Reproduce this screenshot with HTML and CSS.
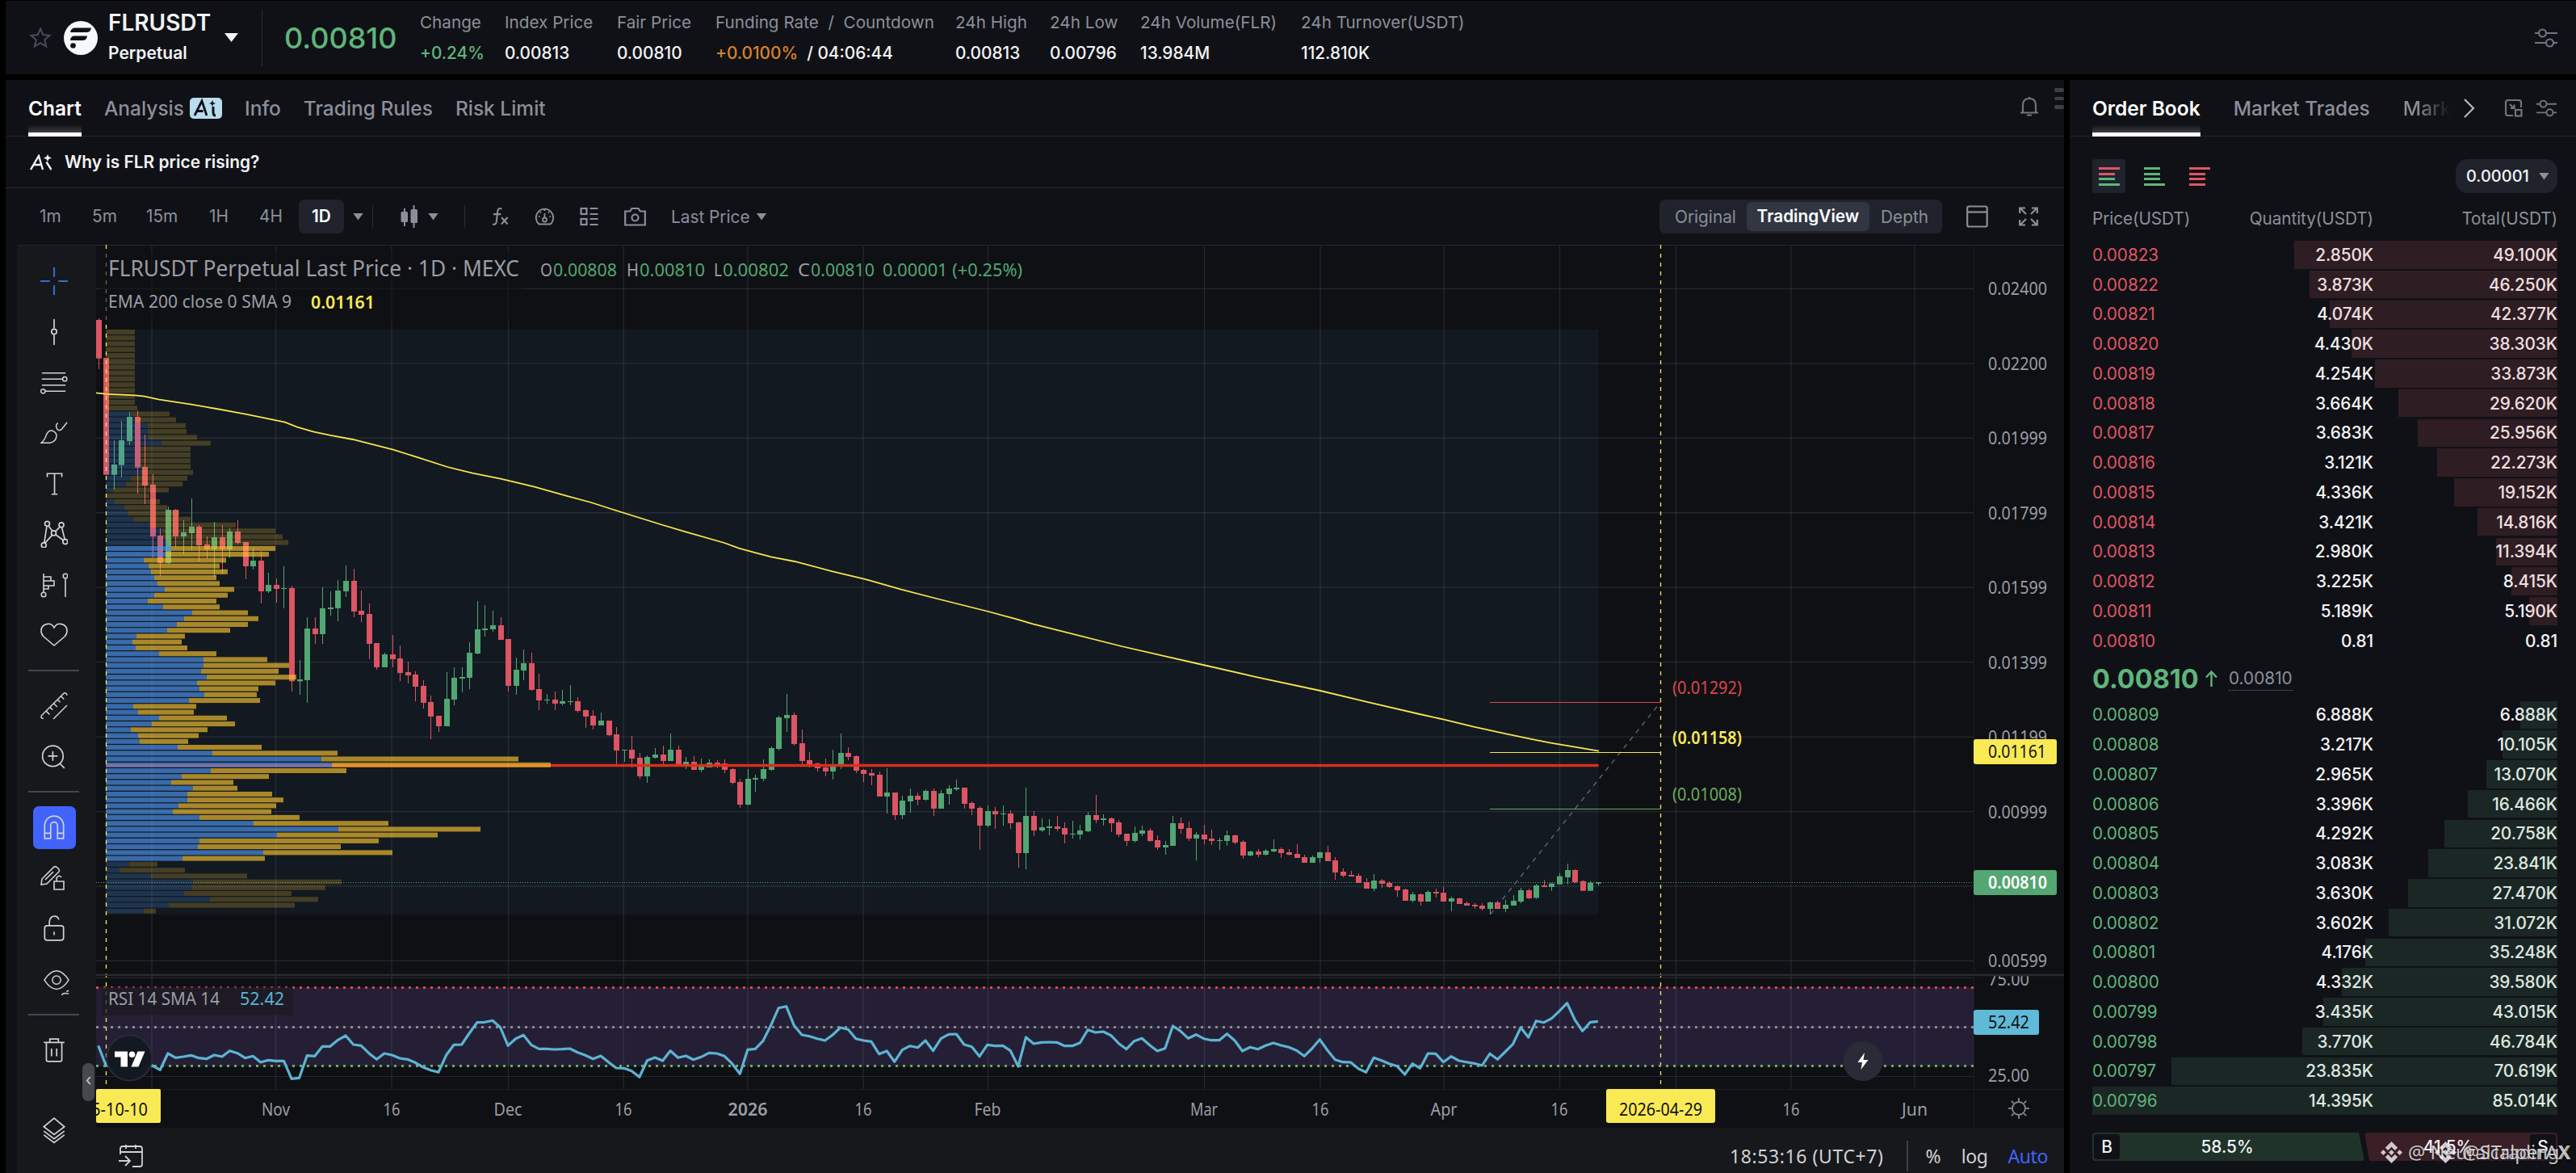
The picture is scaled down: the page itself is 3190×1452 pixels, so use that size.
FILE: index.html
```html
<!DOCTYPE html>
<html lang="en">
<head>
    <meta charset="UTF-8">
    <meta name="viewport" content="width=device-width, initial-scale=1.0">
    <title>FLRUSDT Perpetual</title>
    <link rel="stylesheet" href="styles.css">
</head>
<body>

    <!-- Ticker header -->
    <header class="ticker">
        <svg class="star" viewBox="0 0 28 28"><path d="M14 2.500l3.300 7.600 8.200.8-6.200 5.400 1.900 8.200L14 20.200l-7.200 4.300 1.900-8.200-6.200-5.400 8.200-.8z"/></svg>
        <svg class="coin" viewBox="0 0 42 42"><circle cx="21" cy="21" r="21" fill="#f6f7f9"/><path d="M14 8.500h20q-.5 5.500-6.500 5.500H8q1-5.500 6-5.500zM13 18.500h16q-.5 5.500-6 5.500H8q.5-5.500 5-5.500z" fill="#101116"/><circle cx="11.500" cy="30.500" r="3.300" fill="#101116"/></svg>
        <div class="pair">
            <div class="pair-name">FLRUSDT</div>
            <div class="pair-kind">Perpetual</div>
        </div>
        <span class="caret caret-big"></span>
        <span class="ticker-line"></span>
        <div class="ticker-price">0.00810</div>
        <div class="stats">
            <div class="stat s1"><span>Change</span><b class="up">+0.24%</b></div>
            <div class="stat s2"><span>Index Price</span><b>0.00813</b></div>
            <div class="stat s3"><span>Fair Price</span><b>0.00810</b></div>
            <div class="stat s4"><span>Funding Rate&nbsp; /&nbsp; Countdown</span><b><i>+0.0100%</i>&nbsp; / 04:06:44</b></div>
            <div class="stat s5"><span>24h High</span><b>0.00813</b></div>
            <div class="stat s6"><span>24h Low</span><b>0.00796</b></div>
            <div class="stat s7"><span>24h Volume(FLR)</span><b>13.984M</b></div>
            <div class="stat s8"><span>24h Turnover(USDT)</span><b>112.810K</b></div>
        </div>
        <svg class="ico sliders" viewBox="0 0 28 28"><path d="M0 8h5M14 8h14M0 20h14M23 20h5"/><circle cx="9.500" cy="8" r="4.500"/><circle cx="18.500" cy="20" r="4.500"/></svg>
    </header>

    <main class="trade">
        <!-- Chart side -->
        <section class="chart-panel">
            <nav class="tabs">
                <a class="tab active">Chart</a>
                <a class="tab">Analysis
                    <svg class="ai-badge" viewBox="0 0 40 26"><rect width="40" height="26" rx="5" fill="#b9dcee"/><path d="M6 22l9-18 6 18M9.500 16.500h7" fill="none" stroke="#101116" stroke-width="2.800"/><path d="M29 11v7q0 4 3 4" fill="none" stroke="#101116" stroke-width="3"/><path d="M28 3l1.300 2.900L32 7l-2.700 1.100L28 11l-1.300-2.900L24 7l2.700-1.100z" fill="#101116"/></svg>
                </a>
                <a class="tab">Info</a>
                <a class="tab">Trading Rules</a>
                <a class="tab">Risk Limit</a>
                <svg class="ico bell" viewBox="0 0 24 26"><path d="M4 20V11q0-8 8-8t8 8v9M1 20.500h22M12 3V1M9 23.500h6"/></svg>
                <span class="grip"><i></i><i></i><i></i></span>
            </nav>

            <div class="ask-ai">
                <svg class="ai-mark" viewBox="0 0 30 20"><path d="M1 19L11 2l5 17M5 13h8M20.500 9.500l6 9.500" fill="none" stroke="#f2f3f5" stroke-width="2.400"/><path d="M22 0l1.400 3.100L27 4.500l-3.600 1.400L22 9l-1.400-3.100L17 4.500l3.600-1.400z" fill="#f2f3f5"/></svg>
                <b>Why is FLR price rising?</b>
            </div>

            <div class="toolbar">
                <span class="tf t1">1m</span>
                <span class="tf t2">5m</span>
                <span class="tf t3">15m</span>
                <span class="tf t4">1H</span>
                <span class="tf t5">4H</span>
                <span class="tf t6">1D</span>
                <span class="caret c1"></span>
                <span class="bar-line l1"></span>
                <svg class="candles" viewBox="0 0 22 28"><path d="M5 4v22M16.500 0v28" stroke="#8b8f9a" stroke-width="2"/><rect x="0.500" y="8" width="8.500" height="13" rx="1.500" fill="#8b8f9a"/><rect x="12.500" y="5" width="8.500" height="17" rx="1.500" fill="#8b8f9a"/></svg>
                <span class="caret c2"></span>
                <span class="bar-line l2"></span>
                <svg class="ico fx" viewBox="0 0 22 24"><path d="M13 2q-5-2-5.500 4L6 19q-.6 4-5 3M2 9h10M12.500 13l8 9M20.500 13l-8 9"/></svg>
                <svg class="ico gauge" viewBox="0 0 24 24"><path d="M5 21.500a10.700 10.700 0 1 1 14 0zM12 8v6M12 3.500V5M4.500 12H6M18 12h1.500M6.500 6.500l1 1M17.500 6.500l-1 1"/><circle cx="12" cy="16" r="2.500"/></svg>
                <svg class="ico list" viewBox="0 0 22 24"><rect x="1" y="2" width="7" height="7"/><rect x="1" y="15" width="7" height="7"/><path d="M12 2h10M12 9h10M12 15h10M12 22h10"/></svg>
                <svg class="ico camera" viewBox="0 0 27 24"><path d="M1.200 5.500h6L9.500 2h8l2.300 3.500h6V22.500H1.200z"/><circle cx="13.500" cy="13.500" r="4"/></svg>
                <span class="last">Last Price</span>
                <span class="caret c3"></span>
                <div class="switch">
                    <span>Original</span>
                    <span class="on">TradingView</span>
                    <span>Depth</span>
                </div>
                <svg class="ico panel-ico" viewBox="0 0 27 28"><rect x="1.200" y="1.500" width="24.500" height="25" rx="2"/><path d="M1 8.500h25"/></svg>
                <svg class="ico full" viewBox="0 0 24 24"><path d="M1.200 8V1.500H8M16 1.500h6.800V8M22.800 16v6.500H16M8 22.500H1.200V16M2 2l7 7M22 2l-7 7M22 22l-7-7M2 22l7-7"/></svg>
            </div>

            <div class="tv">
                <!-- Drawing tools -->
                <aside class="tools">
                    <div class="tool"><svg viewBox="0 0 32 32"><path class="blue" d="M16 0v11M16 21v11M0 16h11M21 16h11"/></svg></div>
                    <div class="tool"><svg viewBox="0 0 32 32"><path d="M16 1v11M16 19v12"/><circle cx="16" cy="15.500" r="3"/></svg></div>
                    <div class="tool"><svg viewBox="0 0 36 32"><path d="M2 4h31M2 12h27M2 20h31M6 28h27"/><circle cx="32" cy="12" r="2.800"/><circle cx="3.500" cy="28" r="2.800"/></svg></div>
                    <div class="tool"><svg viewBox="0 0 36 32"><path d="M1 29q5-4 7-11 3-6 8-5 6 3 5 8-1 7-9 8zM23 3q-4 2-1 8 3 3 6 0l7-9"/></svg></div>
                    <div class="tool"><svg viewBox="0 0 32 32"><path d="M8 8V4h17v4M16.500 4v24M13 28h7"/></svg></div>
                    <div class="tool"><svg viewBox="0 0 32 32"><path d="M7.500 7L4.500 26M9.500 6.500l4.500 6M17.500 13l5.500-5.500M25 8.500l3.500 14M5.500 26.500l8-9M18 17l9 6.500"/><circle cx="8" cy="4" r="2.800"/><circle cx="24.500" cy="5.500" r="2.800"/><circle cx="15.500" cy="15" r="2.800"/><circle cx="4" cy="29" r="2.800"/><circle cx="29" cy="25" r="2.800"/></svg></div>
                    <div class="tool"><svg viewBox="0 0 34 32"><path d="M4 2v23M4 6h9v5H4M4 11h13v6H4M4 17h6v4H4M31 8v23"/><circle cx="4" cy="28" r="2.800"/><circle cx="31" cy="5" r="2.800"/></svg></div>
                    <div class="tool"><svg viewBox="0 0 34 32"><path d="M17 7C13-1 1 2 1 11q0 4 3 7l13 11 13-11q3-3 3-7c0-9-12-12-16-4z"/></svg></div>
                    <div class="tool-sep"></div>
                    <div class="tool"><svg viewBox="0 0 36 36"><path d="M1 31L31 1q3-1 4 3M1 31q0 4 3 3M17 35l18-18M8 25l4 4M13 20l3 3M18 15l4 4M23 10l3 3M27 5l4 4"/></svg></div>
                    <div class="tool"><svg viewBox="0 0 32 32"><circle cx="14.500" cy="15" r="12"/><path d="M9 15h11M14.500 9.500v11M23 24l5 5"/></svg></div>
                    <div class="tool-sep"></div>
                    <div class="tool"><div class="magnet"><svg viewBox="0 0 32 32"><path d="M5 29V14a11 11 0 0 1 22 0v15h-7V14a4 4 0 0 0-8 0v15zM5 23h7M20 23h7"/></svg></div></div>
                    <div class="tool"><svg viewBox="0 0 34 34"><path d="M2 18L17 3q2-1 4 1l2 2q1 2 0 3L8 24l-7 1zM6 19l10-10M18 28h-1v-7h12v10H17v-4M20 21v-4q3-5 6-1"/></svg></div>
                    <div class="tool"><svg viewBox="0 0 32 32"><rect x="5" y="13" width="22" height="17" rx="3"/><path d="M10.500 13V8q1-6 6-6 4 0 5 4M16 20v4"/></svg></div>
                    <div class="tool"><svg viewBox="0 0 36 36" class="eye"><path d="M2 16Q18-8 34 16 18 40 2 16z"/><circle cx="18" cy="16" r="5.500"/><path d="M25 36q1-4 9-2M31 31l3-1"/></svg></div>
                    <div class="tool-sep"></div>
                    <div class="tool"><svg viewBox="0 0 32 32"><path d="M4 7h24M11 7V3h10v4M7 7v20q0 2 2 2h14q2 0 2-2V7M13 14v9M19 14v9"/></svg></div>
                    <div class="tool tool-last"><svg viewBox="0 0 32 32"><path d="M16 2l12 10-12 9-12-9zM4 17l12 9 12-9M4 21.500l12 9 12-9"/></svg></div>
                    <span class="handle">‹</span>
                </aside>

                <div class="plot">
                    <svg id="chart" class="chart" viewBox="119 303 2437 1093"></svg>
                    <div class="footer">
                        <svg class="goto" viewBox="0 0 30 28"><path d="M2 12V5q0-3 3-3h21q3 0 3 3v19q0 3-3 3h-9M9 0v5M21 0v5M2 9h27M0 20h13M8 14l6 6-6 6"/></svg>
                        <span class="clock">18:53:16 (UTC+7)</span>
                        <span class="footer-line"></span>
                        <span class="pct">%</span>
                        <span class="log">log</span>
                        <span class="auto">Auto</span>
                    </div>
                </div>
            </div>
        </section>

        <!-- Order book -->
        <section class="book">
            <nav class="tabs book-tabs">
                <a class="tab active">Order Book</a>
                <a class="tab">Market Trades</a>
                <a class="tab fade">Mark</a>
                <svg class="ico chev" viewBox="0 0 16 24"><path d="M2 1l11 11L2 23"/></svg>
                <svg class="ico layout" viewBox="0 0 22 22"><path d="M20 10V4q0-3-3-3H4Q1 1 1 4v13q0 3 3 3h6M6 6l5 5M11.500 6.500V11H7"/><rect x="13" y="13" width="7.500" height="7.500"/></svg>
                <svg class="ico sliders small" viewBox="0 0 28 28"><path d="M0 8h5M14 8h14M0 20h14M23 20h5"/><circle cx="9.500" cy="8" r="4.500"/><circle cx="18.500" cy="20" r="4.500"/></svg>
            </nav>
            <div class="modes">
                <span class="mode on"><i class="r w"></i><i class="r"></i><i class="g"></i><i class="g w"></i></span>
                <span class="mode"><i class="g"></i><i class="g"></i><i class="g"></i><i class="g w"></i></span>
                <span class="mode"><i class="r w"></i><i class="r"></i><i class="r"></i><i class="r"></i></span>
                <span class="step">0.00001 <span class="caret"></span></span>
            </div>
            <div class="row head"><span>Price(USDT)</span><span>Quantity(USDT)</span><span>Total(USDT)</span></div>
            <div id="asks" class="asks"></div>
            <div class="mid">
                <b>0.00810</b>
                <svg viewBox="0 0 15 20"><path d="M7.500 20V2M1 8.500l6.500-7 6.500 7"/></svg>
                <span>0.00810</span>
            </div>
            <div id="bids" class="bids"></div>
            <div class="ratio">
                <div class="ratio-buy"><span>B</span><b>58.5%</b></div>
                <div class="ratio-sell"><b>41.5%</b><span>S</span></div>
            </div>
            <div class="mark m1"><svg viewBox="0 0 28 28"><path d="M14 0l8 8-3.500 3.500L14 7l-4.500 4.500L6 8zM14 28l8-8-3.500-3.500L14 21l-4.500-4.500L6 20zM14 10.500l3.500 3.500-3.500 3.500-3.500-3.500zM3.500 10.500L7 14l-3.500 3.500L0 14zM24.500 10.500L28 14l-3.500 3.500L21 14z"/></svg>@ NeuralTradingX</div>
            <div class="mark m2"><svg viewBox="0 0 28 28"><path d="M14 0l8 8-3.500 3.500L14 7l-4.500 4.500L6 8zM14 28l8-8-3.500-3.500L14 21l-4.500-4.500L6 20zM14 10.500l3.500 3.500-3.500 3.500-3.500-3.500zM3.500 10.500L7 14l-3.500 3.500L0 14zM24.500 10.500L28 14l-3.500 3.500L21 14z"/></svg>@ScalperAX</div>
        </section>
    </main>

    <script src="script.js"></script>
</body>
</html>
```

FILE: styles.css
```css
* {
    box-sizing: border-box;
}
body {
    margin: 0;
    width: 3190px;
    height: 1452px;
    overflow: hidden;
    padding: 1px 0 0 7px;
    background: #000;
    color: #f2f3f5;
    font-family: Inter, "Liberation Sans", sans-serif;
    font-size: 20.8px;
}
.up {
    color: #5fb57b;
}
.ico {
    flex: none;
    fill: none;
    stroke: #70747f;
    stroke-width: 2.2;
}
.caret {
    flex: none;
    width: 13px;
    height: 9px;
    background: #8b8f9a;
    clip-path: polygon(0 0, 100% 0, 50% 100%);
}

/* Ticker header */
.ticker {
    display: flex;
    align-items: center;
    height: 91px;
    padding: 0 23px 0 28px;
    background: #101116;
}
.star {
    width: 30px;
    height: 28px;
    fill: none;
    stroke: #4a4d57;
    stroke-width: 2;
}
.coin {
    width: 42px;
    height: 42px;
    margin-left: 14px;
}
.pair {
    width: 144px;
    margin-left: 13px;
    font-weight: 600;
}
.pair-name {
    font-size: 28px;
    line-height: 38px;
}
.pair-kind {
    font-size: 21px;
    line-height: 38px;
}
.caret-big {
    width: 17px;
    height: 11px;
    background: #f2f3f5;
}
.ticker-line {
    width: 1px;
    height: 70px;
    margin-left: 29px;
    background: #2b2d34;
}
.ticker-price {
    width: 168px;
    margin-left: 27px;
    color: #5fb57b;
    font-size: 36px;
    font-weight: 500;
}
.stats {
    display: flex;
    flex: 1;
}
.stat {
    display: flex;
    flex-direction: column;
    line-height: 38px;
    white-space: nowrap;
}
.stat span {
    color: #8b8f9a;
    font-size: 20.7px;
}
.stat b {
    font-weight: 500;
}
.stat i {
    color: #d9822b;
    font-style: normal;
}
.s1 { width: 105px; }
.s2 { width: 139px; }
.s3 { width: 122px; }
.s4 { width: 297px; }
.s5 { width: 117px; }
.s6 { width: 112px; }
.s7 { width: 199px; }
.sliders {
    width: 28px;
    height: 28px;
}

.trade {
    display: flex;
    gap: 7px;
    height: 1353px;
    margin-top: 7px;
}
.chart-panel {
    display: flex;
    flex-direction: column;
    width: 2549px;
    background: #101116;
}

/* Tabs */
.tabs {
    display: flex;
    gap: 28px;
    height: 70px;
    padding-left: 28px;
    border-bottom: 1px solid #25272e;
}
.tab {
    display: flex;
    align-items: center;
    gap: 7px;
    height: 70px;
    color: #8b8f9a;
    font-size: 24.5px;
    font-weight: 500;
    white-space: nowrap;
}
.tab.active {
    color: #fff;
    font-weight: 600;
    background: linear-gradient(#fff, #fff) bottom / 100% 5px no-repeat,
        linear-gradient(rgba(255, 255, 255, 0), rgba(255, 255, 255, 0.28)) bottom / 100% 15px no-repeat;
}
.ai-badge {
    width: 40px;
    height: 26px;
}
.bell {
    width: 24px;
    height: 26px;
    margin: 20px 0 0 auto;
}
.grip {
    display: flex;
    flex-direction: column;
    gap: 6px;
    width: 12px;
    margin: 10px 0 0 -9px;
}
.grip i {
    height: 4.5px;
    border-radius: 2px;
    background: #3b3f49;
}

.ask-ai {
    display: flex;
    align-items: center;
    gap: 13px;
    height: 64px;
    padding-left: 30px;
    border-bottom: 1px solid #25272e;
}
.ai-mark {
    width: 30px;
    height: 20px;
}
.ask-ai b {
    font-size: 20.9px;
    font-weight: 600;
}

/* Chart toolbar */
.toolbar {
    display: flex;
    align-items: center;
    height: 70px;
    padding: 0 32px 0 42px;
    color: #8b8f9a;
}
.tf {
    flex: none;
    height: 42px;
    line-height: 41px;
}
.t1 { width: 65px; }
.t2 { width: 67px; }
.t3 { width: 78px; }
.t4 { width: 62px; }
.t5 { width: 49px; }
.t6 {
    width: 56px;
    border-radius: 7px;
    background: #20232b;
    color: #fff;
    font-weight: 600;
    text-align: center;
}
.c1 { margin-left: 11px; }
.bar-line {
    width: 1px;
    height: 28px;
    background: #2b2d34;
}
.l1 { margin-left: 11px; }
.candles {
    width: 22px;
    height: 28px;
    margin: 0 12px 0 34px;
}
.l2 { margin: 0 33px 0 32px; }
.fx {
    width: 21px;
    height: 24px;
}
.gauge {
    width: 25px;
    height: 24px;
    margin-left: 32px;
}
.list {
    width: 23px;
    height: 24px;
    margin-left: 31px;
}
.camera {
    width: 27px;
    height: 24px;
    margin-left: 32px;
}
.toolbar .ico {
    stroke: #8b8f9a;
}
.toolbar .gauge {
    stroke-width: 1.8;
}
.last {
    margin: 0 8px 0 31px;
}
.switch {
    display: flex;
    align-items: center;
    justify-content: space-between;
    width: 350px;
    height: 42px;
    margin-left: auto;
    padding: 0 17px 0 19px;
    border-radius: 7px;
    background: #20232b;
}
.switch .on {
    width: 152px;
    height: 36px;
    margin: 0 0 0 -1px;
    border-radius: 6px;
    background: #323643;
    color: #fff;
    font-weight: 600;
    line-height: 35px;
    text-align: center;
}
.panel-ico {
    width: 27px;
    height: 28px;
    margin: 0 38px 0 30px;
}
.full {
    width: 24px;
    height: 24px;
}

/* TradingView area */
.tv {
    display: flex;
    flex: 1;
    padding-left: 14px;
}
.tools {
    position: relative;
    display: flex;
    flex-direction: column;
    width: 98px;
    padding: 13px 6px 0 0;
    background: #17181c;
    border-top: 1px solid #25272e;
}
.tool {
    display: flex;
    align-items: center;
    justify-content: center;
    height: 62.6px;
}
.tool svg {
    width: 34px;
    height: 34px;
    fill: none;
    stroke: #d0d2d6;
    stroke-width: 1.6;
}
.tool .blue {
    stroke: #2f6fd0;
    stroke-width: 2;
}
.tool .eye {
    margin: 6px 0 0 6px;
}
.tool-sep {
    width: 63px;
    height: 25px;
    margin-left: 14px;
    background: linear-gradient(#45474e, #45474e) center / 100% 2px no-repeat;
}
.magnet {
    display: flex;
    align-items: center;
    justify-content: center;
    width: 53px;
    height: 53px;
    border-radius: 7px;
    background: #4263fb;
}
.tool-last {
    margin-top: 37px;
}
.handle {
    position: absolute;
    right: 2px;
    top: 1012px;
    width: 15px;
    height: 47px;
    border-radius: 7px;
    background: #45484f;
    color: #c8cacf;
    font-size: 20px;
    line-height: 42px;
    text-align: center;
}
.plot {
    display: flex;
    flex-direction: column;
}
.chart {
    display: block;
    width: 2437px;
    height: 1093px;
}
.chart text {
    font-family: "Noto Sans", "Open Sans", sans-serif;
}
.footer {
    display: flex;
    align-items: center;
    flex: 1;
    padding: 13px 20px 0 28px;
    background: #17181c;
    color: #d0d2d6;
    font-family: "Noto Sans", "Open Sans", sans-serif;
    font-size: 23px;
}
.goto {
    width: 30px;
    height: 28px;
    margin-right: auto;
    fill: none;
    stroke: #d0d2d6;
    stroke-width: 1.8;
}
.footer-line {
    width: 2px;
    height: 38px;
    margin: 0 22px 0 28px;
    background: #3d3f45;
}
.log {
    margin: 0 25px;
}
.clock {
    letter-spacing: 0.6px;
}
.log,
.auto {
    letter-spacing: -0.4px;
}
.auto {
    color: #4263fb;
}

/* Order book */
.book {
    position: relative;
    display: flex;
    flex-direction: column;
    width: 627px;
    padding-right: 23px;
    background: #101116;
}
.book-tabs {
    align-items: center;
    gap: 41px;
    margin-right: -23px;
    padding-right: 23px;
}
.fade {
    width: 58px;
    background: linear-gradient(90deg, #8b8f9a 30%, #101116);
    -webkit-background-clip: text;
    background-clip: text;
    color: transparent;
}
.chev {
    width: 16px;
    height: 24px;
    margin-left: -25px;
    stroke: #b4b7be;
}
.layout {
    width: 22px;
    height: 22px;
    margin-left: -5px;
}
.book-tabs .small {
    width: 25px;
    height: 26px;
    margin-left: -24px;
}
.modes {
    display: flex;
    align-items: center;
    gap: 15px;
    margin: 28px 0 0 28px;
}
.mode {
    display: flex;
    flex-direction: column;
    gap: 3.6px;
    width: 41px;
    height: 42px;
    padding: 10px 0 0 8px;
    border-radius: 4px;
}
.mode.on {
    background: #20232b;
}
.mode i {
    width: 20px;
    height: 3px;
}
.mode .w {
    width: 26px;
}
.r {
    background: #df5564;
}
.g {
    background: #5fb57b;
}
.step {
    display: flex;
    align-items: center;
    justify-content: space-between;
    width: 126px;
    height: 42px;
    margin-left: auto;
    padding: 0 10px 0 13px;
    border-radius: 15px;
    background: #20232b;
    font-weight: 500;
    font-size: 20px;
}
.row {
    position: relative;
    display: grid;
    grid-template-columns: 160px 188px 1fr;
    align-items: center;
    height: 34.7px;
    margin: 0 0 2.07px 28px;
    font-weight: 500;
    letter-spacing: -0.1px;
}
.row span:nth-child(n + 2) {
    text-align: right;
}
.row span:first-child {
    font-weight: 400;
}
.head {
    height: 59px;
    margin-bottom: 0;
    padding-top: 3px;
    color: #8b8f9a;
}
.head span {
    font-weight: 400;
}
.asks span:first-child {
    color: #df5564;
}
.bids span:first-child {
    color: #5fb57b;
}
.depth {
    position: absolute;
    top: 0;
    right: 0;
    height: 100%;
    background: rgba(224, 100, 112, 0.15);
}
.bids .depth {
    background: rgba(96, 165, 122, 0.15);
}
.mid {
    display: flex;
    align-items: center;
    height: 55px;
    padding: 2px 0 2px 28px;
    color: #5fb57b;
}
.mid b {
    width: 140px;
    font-size: 32.5px;
    font-weight: 700;
}
.mid svg {
    width: 15px;
    height: 20px;
    fill: none;
    stroke: #5fb57b;
    stroke-width: 2.4;
}
.mid span {
    margin-left: 14px;
    border-bottom: 1px dotted #6b6f7a;
    color: #8b8f9a;
    line-height: 29px;
}
.ratio {
    display: flex;
    height: 35px;
    margin: 20px 0 0 28px;
    font-weight: 500;
}
.ratio-buy,
.ratio-sell {
    display: flex;
    align-items: center;
    padding: 2px;
    border-radius: 4px;
}
.ratio b {
    flex: 1;
    font-weight: 500;
    text-align: center;
}
.ratio span {
    width: 32px;
    height: 31px;
    border-radius: 3px;
    background: #101116;
    line-height: 31px;
    text-align: center;
}
.ratio-buy {
    width: 337px;
    padding-right: 37px;
    background: #20332a;
    clip-path: polygon(0 0, 330px 0, 100% 100%, 0 100%);
}
.ratio-sell {
    flex: 1;
    background: #3a1f26;
    clip-path: polygon(0 0, 100% 0, 100% 100%, 6px 100%);
}
.mark {
    position: absolute;
    top: 1312px;
    display: flex;
    align-items: center;
    color: rgba(232, 233, 236, 0.85);
    font-family: "Noto Sans", sans-serif;
    font-size: 23.8px;
    line-height: 30px;
    text-shadow: 0 1px 2px rgba(0, 0, 0, 0.6);
    white-space: nowrap;
}
.mark svg {
    width: 27px;
    height: 27px;
    margin-right: 7px;
    fill: rgba(232, 233, 236, 0.85);
}
.m1 {
    left: 385px;
}
.m2 {
    left: 452px;
}
```

FILE: script.js
```js
// ---------- order book ----------
const asks = [
    ['0.00823', '2.850K', '49.100K', 326], ['0.00822', '3.873K', '46.250K', 307],
    ['0.00821', '4.074K', '42.377K', 282], ['0.00820', '4.430K', '38.303K', 255],
    ['0.00819', '4.254K', '33.873K', 226], ['0.00818', '3.664K', '29.620K', 197],
    ['0.00817', '3.683K', '25.956K', 173], ['0.00816', '3.121K', '22.273K', 149],
    ['0.00815', '4.336K', '19.152K', 128], ['0.00814', '3.421K', '14.816K', 99],
    ['0.00813', '2.980K', '11.394K', 76], ['0.00812', '3.225K', '8.415K', 57],
    ['0.00811', '5.189K', '5.190K', 35], ['0.00810', '0.81', '0.81', 0]
];
const bids = [
    ['0.00809', '6.888K', '6.888K', 46], ['0.00808', '3.217K', '10.105K', 68],
    ['0.00807', '2.965K', '13.070K', 88], ['0.00806', '3.396K', '16.466K', 111],
    ['0.00805', '4.292K', '20.758K', 140], ['0.00804', '3.083K', '23.841K', 160],
    ['0.00803', '3.630K', '27.470K', 185], ['0.00802', '3.602K', '31.072K', 209],
    ['0.00801', '4.176K', '35.248K', 238], ['0.00800', '4.332K', '39.580K', 267],
    ['0.00799', '3.435K', '43.015K', 290], ['0.00798', '3.770K', '46.784K', 316],
    ['0.00797', '23.835K', '70.619K', 478], ['0.00796', '14.395K', '85.014K', 576]
];
function renderBook(id, rows) {
    document.getElementById(id).innerHTML = rows.map(r =>
        `<div class="row"><span>${r[0]}</span><span>${r[1]}</span><span>${r[2]}</span>` +
        `<div class="depth" style="width:${r[3]}px"></div></div>`).join('');
}
renderBook('asks', asks);
renderBook('bids', bids);

// ---------- chart ----------
const X0 = 131.3, STEP = 9.573;
const barX = i => X0 + STEP * i;
const RED = '#dd5463', GREEN = '#52a673';

// side, high, body top, body bottom, low - in thirds of a pixel from the block base
const blocks = [
    { start: -1, base: 290, bars: `R 312 318 461 501,R 459 459 893 893,G 765 855 893 948,G 693 765 857 903,G 660 678 768 783,R 655 678 866 963,R 744 864 933 1002,R 891 930 1122 1200,R 1092 1119 1221 1268,G 1011 1023 1221 1225,R 1020 1023 1122 1163,G 1062 1107 1122 1188,G 981 1086 1110 1172,R 1080 1086 1155 1215,R 1122 1152 1170 1206,G 1068 1125 1170 1273,R 1080 1125 1170 1262,G 1090 1104 1170 1202,R 1062 1104 1146 1152,R 1143 1143 1233 1281,G 1164 1212 1233 1245,R 1176 1212 1326 1371,G 1257 1302 1326 1332,R 1278 1302 1317 1368,G 1233 1314 1317 1389,R 1305 1314 1660 1698,G 1581 1653 1660 1710,G 1422 1464 1656 1740,R 1422 1464 1485 1521,G 1311 1389 1485 1521,G 1326 1386 1392 1416,G 1284 1323 1389 1437,G 1230 1287 1326 1347,R 1242 1287 1401 1422,R 1323 1398 1413 1440,R 1371 1410 1521 1578,R 1518 1518 1608 1617,G 1554 1560 1608 1608,R 1488 1560 1578 1608,R 1527 1575 1629 1659,R 1587 1626 1638 1668,R 1623 1635 1680 1735,R 1656 1677 1740 1761,R 1713 1737 1791 1875,R 1788 1788 1827 1848,G 1626 1725 1827 1827,G 1608 1647 1728 1749,G 1608 1644 1650 1701,G 1515 1554 1647 1689,G 1362 1467 1557 1560` },
    { start: 49, base: 650, bars: `G 297 384 390 414,G 318 372 387 396,R 342 372 426 426,R 423 423 597 618,G 492 537 597 630,G 462 513 540 576,R 474 513 612 615,R 552 609 651 687,G 627 648 651 663,R 618 648 663 687,G 612 654 663 669,G 594 654 657 669,R 639 654 690 696,R 684 687 711 753,R 687 708 744 759,G 696 726 744 744,R 726 726 780 783,R 750 777 837 891,G 834 834 837 879,R 783 834 867 900,R 846 864 933 942,G 855 861 933 957,G 828 852 864 867,R 819 852 876 888,G 774 834 876 876,R 819 834 891 891,G 861 879 891 906,R 858 879 909 909,G 867 891 909 918,G 870 882 900 900,R 873 882 888 903,R 870 885 909 921,R 903 906 957 963,R 942 954 1038 1050,G 906 942 1038 1041,G 927 939 945 990,G 870 906 942 951,G 822 828 909 912,G 708 714 831 837,G 627 705 717 768,R 696 705 813 819,R 759 810 876 888,R 843 873 891 900,R 882 885 903 915,R 867 900 915 933,G 834 891 915 945,G 774 846 891 906,R 825 846 861 873,R 855 858 912 921,R 906 909 924 954,R 906 921 930 966,R 915 927 1008 1008,G 903 993 1008 1071,R 993 993 1077 1095,G 1005 1023 1077 1092,G 978 1005 1026 1068,R 993 1005 1020 1041,G 981 987 1020 1023,R 978 987 1053 1080,G 984 996 1053 1053,G 966 978 999 1038,G 945 975 981 987,R 975 975 1035 1053` },
    { start: 112, base: 800, bars: `R 576 582 603 627,R 594 600 666 756,G 591 612 666 672,R 597 612 624 678,G 591 621 624 666,R 609 621 657 678,R 651 654 768 822,G 525 630 768 828,R 612 630 684 705,G 639 672 684 690,G 642 669 675 702,R 630 669 678 687,R 654 675 699 732,G 648 696 699 714,G 663 684 699 717,G 615 627 687 690,R 552 627 645 657,G 624 639 645 666,R 636 639 657 690,R 645 654 699 708,R 696 696 723 741,G 669 693 723 729,G 666 684 696 705,R 675 684 723 726,R 702 720 747 756,G 723 738 747 774,G 630 657 741 741,R 636 657 678 696,R 651 675 714 723,G 690 699 714 795,R 663 699 717 735,R 681 714 723 738,G 711 720 723 756,G 684 702 723 741,R 699 702 729 735,R 720 726 777 789,G 759 762 777 780,R 753 762 774 783,G 753 759 774 777,G 717 753 762 765,R 747 753 768 786,R 753 765 774 777,R 735 771 786 786,R 774 783 804 804,G 777 783 804 804,G 762 765 786 804,R 741 765 798 798,R 783 795 840 867,R 825 837 852 858,R 834 849 855 855,R 843 852 879 879,R 861 876 900 900,G 846 870 900 909,R 864 870 882 897,R 873 879 894 897,R 888 891 906 930,R 900 903 945 945,G 912 921 945 951,R 918 921 948 963,G 906 912 948 948,R 900 912 918 933,R 894 915 948 948,G 930 936 948 984,R 933 936 957 957,R 948 954 963 963,R 954 960 966 975,R 954 963 975 981,G 948 951 975 996,R 945 951 975 975,G 942 960 975 987,G 924 945 963 963,G 897 906 948 954,R 900 906 936 939,G 883 888 934 938,R 868 888 894 894,G 878 881 894 908,G 842 854 884 884,G 807 831 858 884,R 828 831 876 880,R 869 872 908 908,G 872 878 908 908,G 876 876 881 888` }
];

// volume profile rows: up volume width, total width
const profile = `0 36,0 36,0 36,0 36,0 36,0 36,0 36,0 36,0 36,0 36,0 36,0 36,0 36,0 39,31 79,37 87,52 99,52 100,52 113,69 130,43 105,43 105,43 105,43 105,44 108,31 101,25 95,9 78,0 54,11 67,23 76,27 91,34 105,54 161,70 210,70 219,76 226,81 210,74 202,47 149,53 141,56 151,60 137,64 141,73 159,60 151,52 137,71 141,107 176,97 189,88 176,76 154,38 98,33 94,37 101,66 137,121 200,121 227,118 214,125 236,113 210,116 189,122 187,103 191,34 112,40 109,66 150,57 160,31 126,40 115,42 102,89 193,132 287,267 511,280 551,130 298,94 202,81 158,108 163,101 206,101 220,90 211,83 205,116 240,183 350,288 464,212 411,116 338,114 291,195 355,95 197,29 64,17 98,56 175,108 292,106 272,97 230,129 263,78 234,47 62`;

const ema = '119,486.3 131,487.7 167,489.3 179,490.7 196,494.3 237,500.7 268,506 308,513.3 353,522.7 368,528.7 388,534.3 408,538.7 437,544 487,556.7 518,566.3 554,578 585,585.7 620,592.7 661,602.3 700,613.3 732,622 760,631 821,650 850,658.7 897,672 915,678.7 937,684.7 955,689.3 984,695 1031,707.3 1073,717.3 1116,729.7 1156,740 1224,757 1256,765.7 1279,772.3 1300,777.7 1389,800 1443,812.3 1481,821 1557,838.3 1635,855 1695,869.3 1758,884 1788,890.7 1825,899.7 1865,908.3 1900,915.7 1919,919.3 1980,929.7';

// RSI, thirds of a pixel below y = 1190
const rsi = [313, 387, 392, 396, 390, 400, 395, 387, 403, 342, 358, 354, 349, 359, 362, 348, 354, 332, 341, 359, 352, 375, 367, 370, 370, 436, 433, 350, 352, 316, 316, 292, 276, 309, 313, 341, 364, 342, 348, 360, 364, 376, 393, 404, 412, 349, 310, 309, 267, 227, 226, 220, 245, 313, 287, 274, 310, 325, 325, 327, 326,
    324, 338, 349, 362, 351, 374, 396, 397, 407, 430, 368, 357, 369, 332, 358, 351, 365, 355, 340, 342, 352, 380, 418, 328, 325, 295, 238, 173, 167, 238, 273, 278, 287, 294, 273, 246, 253, 287, 294, 298, 344, 333, 373, 329, 314, 320, 294, 332, 287, 271, 270, 309, 317, 353, 310, 314, 313, 332, 390, 282, 306, 301, 300, 301, 314, 314, 302, 254, 264, 261, 275, 305, 326, 296, 286, 311, 333, 323, 240, 259, 286, 272, 287, 293, 293, 269, 294, 333, 319, 326, 313, 303, 312, 319, 331, 352, 324, 290, 330, 365, 374, 375, 398, 412, 358, 368,
    380, 389, 420, 380, 397, 342, 343, 374, 353, 369, 374, 379, 387, 343, 364, 336, 307, 246, 282, 221, 227, 212, 185, 155, 217, 259, 226, 223];

const out = [];
const rect = (x, y, w, h, fill, extra = '') => out.push(`<rect x="${x}" y="${y}" width="${w}" height="${h}" fill="${fill}" ${extra}/>`);
const line = (x1, y1, x2, y2, stroke, w = 1, extra = '') => out.push(`<line x1="${x1}" y1="${y1}" x2="${x2}" y2="${y2}" stroke="${stroke}" stroke-width="${w}" ${extra}/>`);
// x is the left edge, len the drawn length, cy the middle of the capitals
const text = (s, x, cy, len, size, fill, extra = '') => out.push(`<text x="${x}" y="${cy + size * 0.357}" textLength="${len}" lengthAdjust="spacingAndGlyphs" font-size="${size}" fill="${fill}" ${extra}>${s}</text>`);

// background and value area
rect(119, 303, 2437, 1093, '#0f1014');
rect(131, 408, 1848.5, 724, '#121920');
rect(119, 1222, 2325, 98, '#251f36');

// grid
const GRID = 'rgba(140,145,160,0.18)';
[188, 341.5, 485, 629.5, 772, 926, 1069, 1223.5, 1491.5, 1635, 1788, 1931.5, 2075.5, 2218, 2371].forEach(x => line(x, 303, x, 1348, GRID, 1.3));
for (let k = 0; k < 10; k++) line(119, 357.4 + 92.45 * k, 2444, 357.4 + 92.45 * k, GRID, 1.3);
[1210.5, 1271.5, 1332.5].forEach(y => line(119, y, 2444, y, GRID));
line(119, 303.5, 2556, 303.5, '#25272e');

// last price line
line(119, 1092.5, 2444, 1092.5, GREEN, 1, 'stroke-dasharray="1 2"');

// candles
blocks.forEach(b => b.bars.split(',').forEach((s, n) => {
    const [side, h, t, bt, l] = s.split(' ');
    const x = Math.round(barX(b.start + n)), y = v => b.base + v / 3;
    const c = side === 'R' ? RED : GREEN;
    const left = Math.max(119, x - 3);
    rect(x, y(h), 1, (l - h) / 3, c);
    rect(left, y(t), x + 4 - left, (bt - t) / 3, c);
}));

// point of control, then the profile over it
line(131, 947.5, 1979.5, 947.5, '#da2f1c', 3.4);
profile.split(',').forEach((s, k) => {
    const [up, total] = s.split(' ').map(Number);
    const a = k >= 37 && k <= 90 ? 0.65 : 0.22;
    const y = (408 + 7.24 * k).toFixed(1);
    rect(131, y, up, 6, `rgba(79,151,245,${a})`);
    rect(131 + up, y, total - up, 6, `rgba(251,197,48,${a})`);
});

out.push(`<polyline points="${ema}" fill="none" stroke="#f8e44f" stroke-width="1.8"/>`);

// projection levels
line(1845.5, 1132, 2056.5, 869, '#6b6b70', 1.3, 'stroke-dasharray="6 6"');
line(1845, 869.5, 2056.5, 869.5, '#d9474b', 1);
line(1845, 931.5, 2056.5, 931.5, '#f4e74f', 1);
line(1845, 1001.5, 2056.5, 1001.5, '#67ad5b', 1.2);
text('(0.01292)', 2071, 852, 86, 21, '#d9474b');
text('(0.01158)', 2071, 914, 86, 21, '#f9ea55', 'font-weight="600"');
text('(0.01008)', 2071, 984, 86, 21, '#67ad5b');

// vertical date lines
[131.5, 2056.5].forEach(x => line(x, 303, x, 1348, '#f9ea55', 1.3, 'stroke-dasharray="5 6"'));

// main legend
rect(126, 310, 520, 88, 'rgba(15,16,20,0.6)');
text('FLRUSDT Perpetual Last Price · 1D · MEXC', 134, 333, 509, 26.5, '#9a9da5');
const ohlc = [['O', '0.00808', 669, 764], ['H', '0.00810', 776, 873], ['L', '0.00802', 884, 977], ['C', '0.00810', 988, 1083]];
ohlc.forEach(o => {
    text(o[0], o[2], 335, o[0] === 'L' ? 10 : 15, 21, '#9a9da5');
    const x = o[2] + (o[0] === 'L' ? 11 : 16);
    text(o[1], x, 335, o[3] - x, 21, GREEN);
});
text('0.00001 (+0.25%)', 1093, 335, 173, 21, GREEN);
text('EMA 200 close 0 SMA 9', 134, 374, 227, 21, '#9a9da5');
text('0.01161', 385, 374, 79, 21.5, '#f9ea55', 'font-weight="600"');

// RSI pane
rect(119, 1205.8, 2437, 2.4, '#2a2b30');
line(119, 1222.5, 2444, 1222.5, '#d9474b', 3, 'stroke-dasharray="3 6"');
line(119, 1271.5, 2444, 1271.5, '#8a8891', 3, 'stroke-dasharray="3 6"');
line(119, 1319.5, 2444, 1319.5, '#67ad5b', 3, 'stroke-dasharray="3 6"');
out.push(`<polyline points="${rsi.map((v, n) => barX(n - 1).toFixed(1) + ',' + (1190 + v / 3).toFixed(1)).join(' ')}" fill="none" stroke="#5cb4d2" stroke-width="3.2" stroke-linejoin="round"/>`);
rect(126, 1222, 237, 35, 'rgba(28,25,32,0.72)');
text('RSI 14 SMA 14', 134, 1237, 138, 21, '#9a9da5');
text('52.42', 297, 1237, 55, 21, '#5cb4d2');

// TradingView badge
out.push('<circle cx="160.300" cy="1309.500" r="28" fill="#121920" stroke="#2c2838" stroke-width="2"/>');
out.push('<path d="M142 1301.500h16v19h-8.500v-12H142zM170.500 1301.500h9l-8 19h-9z" fill="#fff"/><circle cx="163.500" cy="1305.300" r="3.800" fill="#fff"/>');
out.push('<circle cx="2307" cy="1313.500" r="24.500" fill="#2a2b37"/><path d="M2309 1303l-8.500 12h5.500l-1.500 9 9-12h-6z" fill="#fff"/>');

// price axis
line(2444.5, 303, 2444.5, 1396, '#1c1d22');
line(119, 1348.5, 2556, 1348.5, '#1c1d22');
['0.02400', '0.02200', '0.01999', '0.01799', '0.01599', '0.01399', '0.01199', '0.00999', '', '0.00599'].forEach((p, k) => {
    if (p) text(p, 2462, 357.9 + 92.45 * k, 73, 21, '#9a9da5');
});
out.push('<clipPath id="rsiAxis"><rect x="2444" y="1208.200" width="112" height="140"/></clipPath>');
text('75.00', 2462, 1212.5, 51, 21, '#9a9da5', 'clip-path="url(#rsiAxis)"');
text('25.00', 2462, 1332, 51, 21, '#9a9da5');
rect(2444, 915, 103, 31, '#f9ea55', 'rx="3"');
text('0.01161', 2462, 931, 72, 21, '#111');
rect(2444, 1077, 103, 31, '#54a672', 'rx="3"');
text('0.00810', 2462, 1093, 73, 21, '#fff', 'font-weight="600"');
rect(2444, 1250, 81, 31, '#5fbad8', 'rx="3"');
text('52.42', 2462, 1266, 51, 21, '#111');

// time axis
[['Nov', 341.5, 35], ['16', 485, 21], ['Dec', 629, 35], ['16', 772, 21], ['2026', 926, 49], ['16', 1069, 21], ['Feb', 1223, 33], ['Mar', 1491, 34], ['16', 1635, 21], ['Apr', 1788, 33], ['16', 1931, 21], ['16', 2218, 21], ['Jun', 2371, 32]].forEach(t =>
    text(t[0], t[1] - t[2] / 2, 1373.5, t[2], 21, '#9a9da5', t[0] === '2026' ? 'font-weight="600"' : ''));
rect(119, 1348, 80, 42, '#f9ea55', 'rx="2"');
text('2025-10-10', 79, 1373.5, 104, 21, '#111');
rect(1989, 1348, 135, 42, '#f9ea55', 'rx="3"');
text('2026-04-29', 2005, 1373.5, 103, 21, '#111');

// axis settings
out.push('<circle cx="2500" cy="1372" r="8" fill="none" stroke="#85888f" stroke-width="1.800"/>');
for (let a = 0; a < 8; a++) {
    const c = Math.cos(a * Math.PI / 4), s = Math.sin(a * Math.PI / 4);
    line(2500 + 9 * c, 1372 + 9 * s, 2500 + 13 * c, 1372 + 13 * s, '#85888f', 1.8);
}

document.getElementById('chart').innerHTML = out.join('');
```
